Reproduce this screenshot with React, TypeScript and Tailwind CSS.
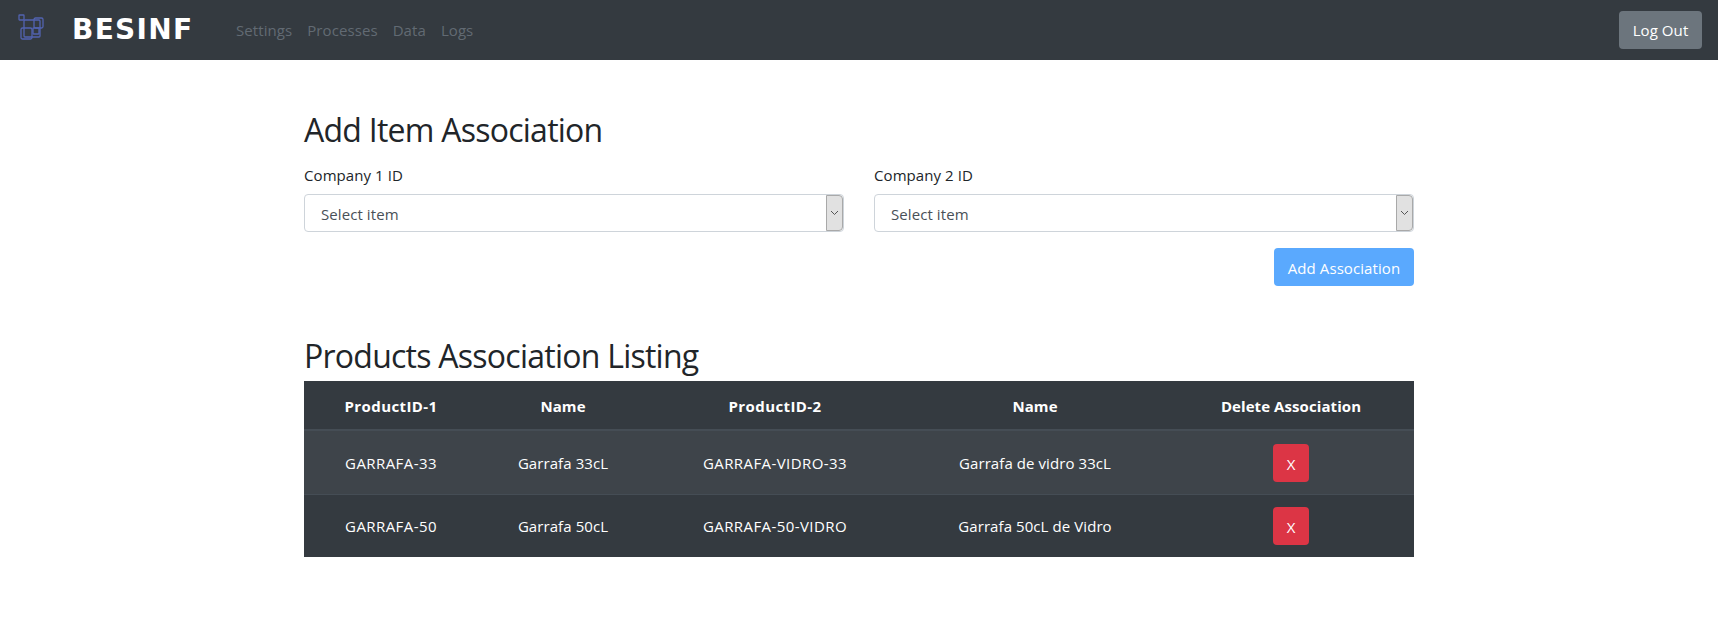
const rows = [
  { id1: 'GARRAFA-33', name1: 'Garrafa 33cL', id2: 'GARRAFA-VIDRO-33', name2: 'Garrafa de vidro 33cL' },
  { id1: 'GARRAFA-50', name1: 'Garrafa 50cL', id2: 'GARRAFA-50-VIDRO', name2: 'Garrafa 50cL de Vidro' },
];

const links = ['Settings', 'Processes', 'Data', 'Logs'];

function Logo() {
  return (
    <svg className="mb-1" width="28" height="28" viewBox="0 0 28 28" fill="none" stroke="#5263b0" strokeWidth="1.3">
      <rect x="1" y="1" width="5" height="5" rx="0.5" />
      <rect x="6" y="6" width="16" height="17" rx="1" />
      <rect x="16" y="4" width="9" height="10" rx="1.5" />
      <rect x="3" y="14" width="11" height="11" rx="1.5" />
      <rect x="15" y="14" width="6" height="6" rx="0.5" />
    </svg>
  );
}

function SelectBox({ label }: { label: string }) {
  return (
    <div className="w-[540px]">
      <label className="block h-[24px] mb-2 leading-[26px] text-[#212529]">{label}</label>
      <div className="flex h-[38px] items-stretch rounded border border-[#ced4da] bg-white">
        <span className="flex-1 pl-4 leading-[38px] text-[#495057]">Select item</span>
        <span className="flex w-[17px] items-center justify-center rounded-r-sm border border-[#a9a9a9] bg-[#e1e1e1]">
          <svg width="9" height="6" viewBox="0 0 9 6" fill="none" stroke="#555" strokeWidth="1">
            <path d="M1 1l3.5 3.5L8 1" />
          </svg>
        </span>
      </div>
    </div>
  );
}

export default function App() {
  return (
    <div className="min-h-[639px] bg-white text-[15px] font-['Open_Sans','Noto_Sans',sans-serif] tracking-[0.08px]">
      <nav className="flex h-[60px] items-center bg-[#343a40] pl-[18px] pr-4">
        <Logo />
        <span className="ml-[26px] w-[120px] whitespace-nowrap font-['DejaVu_Sans',sans-serif] text-[28px] font-bold leading-none tracking-[1.3px] text-white">
          BESINF
        </span>
        <div className="ml-11 flex gap-[15px]">
          {links.map((link) => (
            <a key={link} className="text-[#626a73]">
              {link}
            </a>
          ))}
        </div>
        <button className="ml-auto h-[38px] w-[83px] rounded bg-[#6c757d] text-white">Log Out</button>
      </nav>

      <main className="mx-auto w-[1110px] pt-[50px]">
        <h2 className="h-[38px] text-[32px] leading-[40px] tracking-[-0.75px] text-[#212529]">Add Item Association</h2>
        <div className="mt-[14px] flex justify-between">
          <SelectBox label="Company 1 ID" />
          <SelectBox label="Company 2 ID" />
        </div>
        <div className="mt-4 flex justify-end">
          <button className="h-[38px] w-[140px] rounded bg-[#5aa9fe] pt-[2px] text-white">Add Association</button>
        </div>

        <h2 className="mt-[50px] h-[38px] text-[32px] leading-[40px] tracking-[-0.75px] text-[#212529]">
          Products Association Listing
        </h2>
        <table className="mt-[7px] w-full table-fixed border-collapse text-center text-white">
          <colgroup>
            <col className="w-[174px]" />
            <col className="w-[170px]" />
            <col className="w-[254px]" />
            <col className="w-[266px]" />
            <col className="w-[246px]" />
          </colgroup>
          <thead className="bg-[#343a40]">
            <tr className="h-[49px] border-b-2 border-[#454d55] font-bold">
              <th className="pt-[2px] tracking-[0.4px]">ProductID-1</th>
              <th className="pt-[2px]">Name</th>
              <th className="pt-[2px] tracking-[0.4px]">ProductID-2</th>
              <th className="pt-[2px]">Name</th>
              <th className="pt-[2px]">Delete Association</th>
            </tr>
          </thead>
          <tbody>
            {rows.map((row, idx) => (
              <tr
                key={row.id1}
                className={
                  idx === 0
                    ? 'h-[64px] bg-[#3e444a] [&>td]:pt-[2px]'
                    : 'h-[63px] border-t border-[#454d55] bg-[#343a40]'
                }
              >
                <td className="tracking-[0.42px]">{row.id1}</td>
                <td>{row.name1}</td>
                <td className="tracking-[0.42px]">{row.id2}</td>
                <td>{row.name2}</td>
                <td>
                  <button className="h-[38px] w-9 rounded bg-[#dc3545] pt-[2px] text-white">X</button>
                </td>
              </tr>
            ))}
          </tbody>
        </table>
      </main>
    </div>
  );
}
